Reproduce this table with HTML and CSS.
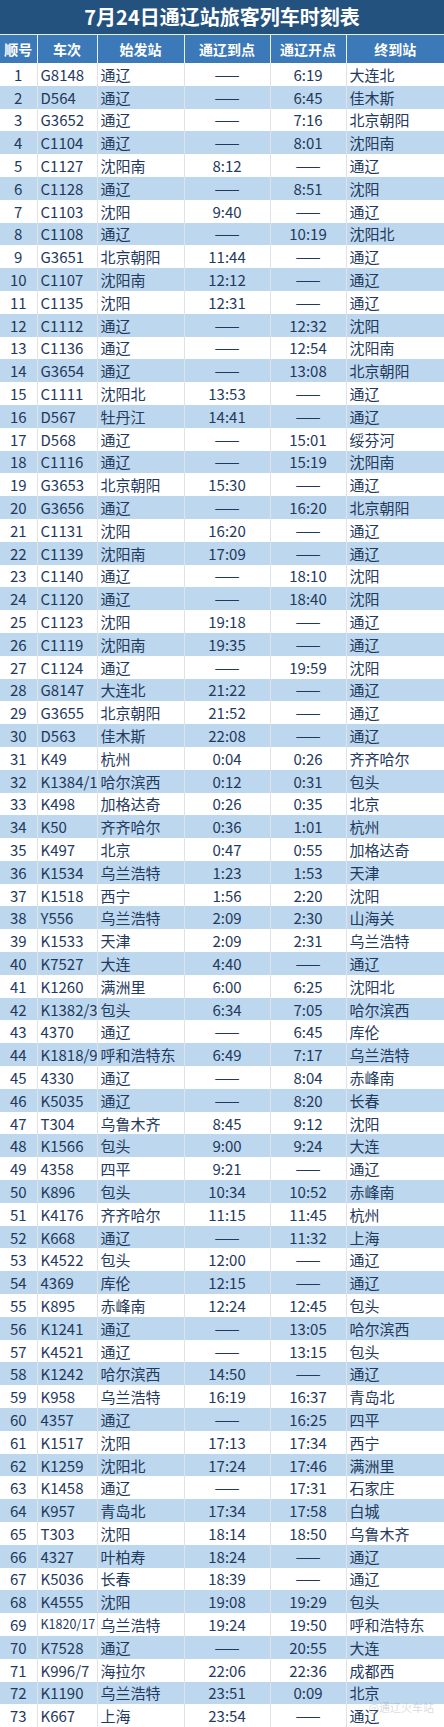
FILE: index.html
```html
<!DOCTYPE html>
<html lang="zh-CN">
<head>
<meta charset="utf-8">
<title>7月24日通辽站旅客列车时刻表</title>
<link rel="stylesheet" href="styles.css">
</head>
<body>
<div class="page">
  <div class="title">7月24日通辽站旅客列车时刻表</div>
  <table class="timetable">
    <colgroup>
      <col class="c-no"><col class="c-train"><col class="c-from"><col class="c-arr"><col class="c-dep"><col class="c-to">
    </colgroup>
    <thead>
      <tr><th>顺号</th><th>车次</th><th>始发站</th><th>通辽到点</th><th>通辽开点</th><th>终到站</th></tr>
    </thead>
    <tbody>
      <tr><td>1</td><td>G8148</td><td>通辽</td><td>——</td><td>6:19</td><td>大连北</td></tr>
      <tr><td>2</td><td>D564</td><td>通辽</td><td>——</td><td>6:45</td><td>佳木斯</td></tr>
      <tr><td>3</td><td>G3652</td><td>通辽</td><td>——</td><td>7:16</td><td>北京朝阳</td></tr>
      <tr><td>4</td><td>C1104</td><td>通辽</td><td>——</td><td>8:01</td><td>沈阳南</td></tr>
      <tr><td>5</td><td>C1127</td><td>沈阳南</td><td>8:12</td><td>——</td><td>通辽</td></tr>
      <tr><td>6</td><td>C1128</td><td>通辽</td><td>——</td><td>8:51</td><td>沈阳</td></tr>
      <tr><td>7</td><td>C1103</td><td>沈阳</td><td>9:40</td><td>——</td><td>通辽</td></tr>
      <tr><td>8</td><td>C1108</td><td>通辽</td><td>——</td><td>10:19</td><td>沈阳北</td></tr>
      <tr><td>9</td><td>G3651</td><td>北京朝阳</td><td>11:44</td><td>——</td><td>通辽</td></tr>
      <tr><td>10</td><td>C1107</td><td>沈阳南</td><td>12:12</td><td>——</td><td>通辽</td></tr>
      <tr><td>11</td><td>C1135</td><td>沈阳</td><td>12:31</td><td>——</td><td>通辽</td></tr>
      <tr><td>12</td><td>C1112</td><td>通辽</td><td>——</td><td>12:32</td><td>沈阳</td></tr>
      <tr><td>13</td><td>C1136</td><td>通辽</td><td>——</td><td>12:54</td><td>沈阳南</td></tr>
      <tr><td>14</td><td>G3654</td><td>通辽</td><td>——</td><td>13:08</td><td>北京朝阳</td></tr>
      <tr><td>15</td><td>C1111</td><td>沈阳北</td><td>13:53</td><td>——</td><td>通辽</td></tr>
      <tr><td>16</td><td>D567</td><td>牡丹江</td><td>14:41</td><td>——</td><td>通辽</td></tr>
      <tr><td>17</td><td>D568</td><td>通辽</td><td>——</td><td>15:01</td><td>绥芬河</td></tr>
      <tr><td>18</td><td>C1116</td><td>通辽</td><td>——</td><td>15:19</td><td>沈阳南</td></tr>
      <tr><td>19</td><td>G3653</td><td>北京朝阳</td><td>15:30</td><td>——</td><td>通辽</td></tr>
      <tr><td>20</td><td>G3656</td><td>通辽</td><td>——</td><td>16:20</td><td>北京朝阳</td></tr>
      <tr><td>21</td><td>C1131</td><td>沈阳</td><td>16:20</td><td>——</td><td>通辽</td></tr>
      <tr><td>22</td><td>C1139</td><td>沈阳南</td><td>17:09</td><td>——</td><td>通辽</td></tr>
      <tr><td>23</td><td>C1140</td><td>通辽</td><td>——</td><td>18:10</td><td>沈阳</td></tr>
      <tr><td>24</td><td>C1120</td><td>通辽</td><td>——</td><td>18:40</td><td>沈阳</td></tr>
      <tr><td>25</td><td>C1123</td><td>沈阳</td><td>19:18</td><td>——</td><td>通辽</td></tr>
      <tr><td>26</td><td>C1119</td><td>沈阳南</td><td>19:35</td><td>——</td><td>通辽</td></tr>
      <tr><td>27</td><td>C1124</td><td>通辽</td><td>——</td><td>19:59</td><td>沈阳</td></tr>
      <tr><td>28</td><td>G8147</td><td>大连北</td><td>21:22</td><td>——</td><td>通辽</td></tr>
      <tr><td>29</td><td>G3655</td><td>北京朝阳</td><td>21:52</td><td>——</td><td>通辽</td></tr>
      <tr><td>30</td><td>D563</td><td>佳木斯</td><td>22:08</td><td>——</td><td>通辽</td></tr>
      <tr><td>31</td><td>K49</td><td>杭州</td><td>0:04</td><td>0:26</td><td>齐齐哈尔</td></tr>
      <tr><td>32</td><td>K1384/1</td><td>哈尔滨西</td><td>0:12</td><td>0:31</td><td>包头</td></tr>
      <tr><td>33</td><td>K498</td><td>加格达奇</td><td>0:26</td><td>0:35</td><td>北京</td></tr>
      <tr><td>34</td><td>K50</td><td>齐齐哈尔</td><td>0:36</td><td>1:01</td><td>杭州</td></tr>
      <tr><td>35</td><td>K497</td><td>北京</td><td>0:47</td><td>0:55</td><td>加格达奇</td></tr>
      <tr><td>36</td><td>K1534</td><td>乌兰浩特</td><td>1:23</td><td>1:53</td><td>天津</td></tr>
      <tr><td>37</td><td>K1518</td><td>西宁</td><td>1:56</td><td>2:20</td><td>沈阳</td></tr>
      <tr><td>38</td><td>Y556</td><td>乌兰浩特</td><td>2:09</td><td>2:30</td><td>山海关</td></tr>
      <tr><td>39</td><td>K1533</td><td>天津</td><td>2:09</td><td>2:31</td><td>乌兰浩特</td></tr>
      <tr><td>40</td><td>K7527</td><td>大连</td><td>4:40</td><td>——</td><td>通辽</td></tr>
      <tr><td>41</td><td>K1260</td><td>满洲里</td><td>6:00</td><td>6:25</td><td>沈阳北</td></tr>
      <tr><td>42</td><td>K1382/3</td><td>包头</td><td>6:34</td><td>7:05</td><td>哈尔滨西</td></tr>
      <tr><td>43</td><td>4370</td><td>通辽</td><td>——</td><td>6:45</td><td>库伦</td></tr>
      <tr><td>44</td><td>K1818/9</td><td>呼和浩特东</td><td>6:49</td><td>7:17</td><td>乌兰浩特</td></tr>
      <tr><td>45</td><td>4330</td><td>通辽</td><td>——</td><td>8:04</td><td>赤峰南</td></tr>
      <tr><td>46</td><td>K5035</td><td>通辽</td><td>——</td><td>8:20</td><td>长春</td></tr>
      <tr><td>47</td><td>T304</td><td>乌鲁木齐</td><td>8:45</td><td>9:12</td><td>沈阳</td></tr>
      <tr><td>48</td><td>K1566</td><td>包头</td><td>9:00</td><td>9:24</td><td>大连</td></tr>
      <tr><td>49</td><td>4358</td><td>四平</td><td>9:21</td><td>——</td><td>通辽</td></tr>
      <tr><td>50</td><td>K896</td><td>包头</td><td>10:34</td><td>10:52</td><td>赤峰南</td></tr>
      <tr><td>51</td><td>K4176</td><td>齐齐哈尔</td><td>11:15</td><td>11:45</td><td>杭州</td></tr>
      <tr><td>52</td><td>K668</td><td>通辽</td><td>——</td><td>11:32</td><td>上海</td></tr>
      <tr><td>53</td><td>K4522</td><td>包头</td><td>12:00</td><td>——</td><td>通辽</td></tr>
      <tr><td>54</td><td>4369</td><td>库伦</td><td>12:15</td><td>——</td><td>通辽</td></tr>
      <tr><td>55</td><td>K895</td><td>赤峰南</td><td>12:24</td><td>12:45</td><td>包头</td></tr>
      <tr><td>56</td><td>K1241</td><td>通辽</td><td>——</td><td>13:05</td><td>哈尔滨西</td></tr>
      <tr><td>57</td><td>K4521</td><td>通辽</td><td>——</td><td>13:15</td><td>包头</td></tr>
      <tr><td>58</td><td>K1242</td><td>哈尔滨西</td><td>14:50</td><td>——</td><td>通辽</td></tr>
      <tr><td>59</td><td>K958</td><td>乌兰浩特</td><td>16:19</td><td>16:37</td><td>青岛北</td></tr>
      <tr><td>60</td><td>4357</td><td>通辽</td><td>——</td><td>16:25</td><td>四平</td></tr>
      <tr><td>61</td><td>K1517</td><td>沈阳</td><td>17:13</td><td>17:34</td><td>西宁</td></tr>
      <tr><td>62</td><td>K1259</td><td>沈阳北</td><td>17:24</td><td>17:46</td><td>满洲里</td></tr>
      <tr><td>63</td><td>K1458</td><td>通辽</td><td>——</td><td>17:31</td><td>石家庄</td></tr>
      <tr><td>64</td><td>K957</td><td>青岛北</td><td>17:34</td><td>17:58</td><td>白城</td></tr>
      <tr><td>65</td><td>T303</td><td>沈阳</td><td>18:14</td><td>18:50</td><td>乌鲁木齐</td></tr>
      <tr><td>66</td><td>4327</td><td>叶柏寿</td><td>18:24</td><td>——</td><td>通辽</td></tr>
      <tr><td>67</td><td>K5036</td><td>长春</td><td>18:39</td><td>——</td><td>通辽</td></tr>
      <tr><td>68</td><td>K4555</td><td>沈阳</td><td>19:08</td><td>19:29</td><td>包头</td></tr>
      <tr><td>69</td><td class="small">K1820/17</td><td>乌兰浩特</td><td>19:24</td><td>19:50</td><td>呼和浩特东</td></tr>
      <tr><td>70</td><td>K7528</td><td>通辽</td><td>——</td><td>20:55</td><td>大连</td></tr>
      <tr><td>71</td><td>K996/7</td><td>海拉尔</td><td>22:06</td><td>22:36</td><td>成都西</td></tr>
      <tr><td>72</td><td>K1190</td><td>乌兰浩特</td><td>23:51</td><td>0:09</td><td>北京</td></tr>
      <tr><td>73</td><td>K667</td><td>上海</td><td>23:54</td><td>——</td><td>通辽</td></tr>
    </tbody>
  </table>
  <div class="watermark">@通辽火车站</div>
</div>
</body>
</html>
```

FILE: styles.css
```css
html, body {
  margin: 0;
  padding: 0;
  background: #ffffff;
}

.page {
  position: relative;
  width: 444px;
  font-family: "Noto Sans CJK SC", "Liberation Sans", sans-serif;
  color: #1f3a5c;
}

.title {
  height: 34px;
  line-height: 34px;
  background: #24527f;
  color: #ffffff;
  font-size: 20px;
  font-weight: bold;
  text-align: center;
  border-bottom: 1px solid #e6edf5;
}

.timetable {
  width: 444px;
  border-collapse: collapse;
  table-layout: fixed;
}

.c-no { width: 37px; }
.c-train { width: 60px; }
.c-from { width: 87px; }
.c-arr { width: 86px; }
.c-dep { width: 76px; }
.c-to { width: 98px; }

.timetable th {
  height: 28px;
  padding: 0;
  background: #3b79b8;
  color: #ffffff;
  font-size: 14px;
  font-weight: bold;
  text-align: center;
  line-height: 1;
  border-left: 1px solid #e8f0f8;
}

.timetable th:first-child,
.timetable td:first-child {
  border-left: none;
}

.timetable td {
  height: 22.8px;
  padding: 0 0 0 3px;
  font-size: 15px;
  line-height: 1;
  white-space: nowrap;
  overflow: hidden;
  border-left: 1px solid #dfe3e8;
}

.timetable tbody tr:nth-child(even) td {
  background: #bdd7ee;
}

.timetable td:nth-child(1),
.timetable td:nth-child(4),
.timetable td:nth-child(5) {
  text-align: center;
  padding: 0;
}

.timetable td.small {
  font-size: 12.5px;
}

.watermark {
  position: absolute;
  right: 10px;
  bottom: 12px;
  font-size: 11px;
  color: rgba(150, 150, 150, 0.35);
}
```
